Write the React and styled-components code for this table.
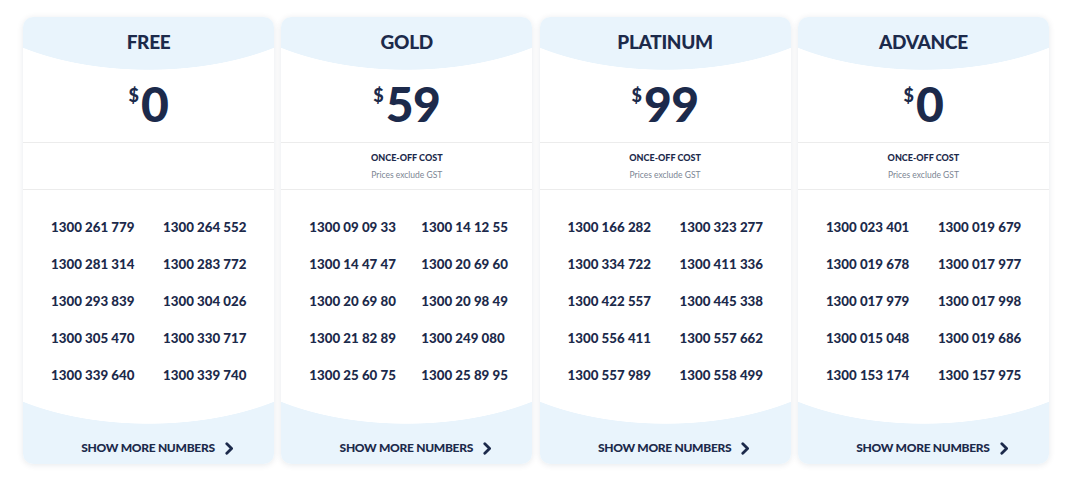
import React from "react";
import styled, { createGlobalStyle } from "styled-components";

const GlobalStyle = createGlobalStyle`
  body {
    margin: 0;
    background: #ffffff;
    font-family: Lato, "Open Sans", sans-serif;
    color: #1c2a4b;
  }
`;

const plans = [
    {
        name: "FREE",
        price: "0",
        cost: false,
        numbers: [
            "1300 261 779", "1300 264 552",
            "1300 281 314", "1300 283 772",
            "1300 293 839", "1300 304 026",
            "1300 305 470", "1300 330 717",
            "1300 339 640", "1300 339 740"
        ]
    },
    {
        name: "GOLD",
        price: "59",
        cost: true,
        numbers: [
            "1300 09 09 33", "1300 14 12 55",
            "1300 14 47 47", "1300 20 69 60",
            "1300 20 69 80", "1300 20 98 49",
            "1300 21 82 89", "1300 249 080",
            "1300 25 60 75", "1300 25 89 95"
        ]
    },
    {
        name: "PLATINUM",
        price: "99",
        cost: true,
        numbers: [
            "1300 166 282", "1300 323 277",
            "1300 334 722", "1300 411 336",
            "1300 422 557", "1300 445 338",
            "1300 556 411", "1300 557 662",
            "1300 557 989", "1300 558 499"
        ]
    },
    {
        name: "ADVANCE",
        price: "0",
        cost: true,
        numbers: [
            "1300 023 401", "1300 019 679",
            "1300 019 678", "1300 017 977",
            "1300 017 979", "1300 017 998",
            "1300 015 048", "1300 019 686",
            "1300 153 174", "1300 157 975"
        ]
    }
];

const Page = styled.div`
  padding: 17px 0 21px 23px;
  display: grid;
  grid-template-columns: repeat(4, 251px);
  column-gap: 7.3px;
`;

const Card = styled.div`
  display: flex;
  flex-direction: column;
  background: #ffffff;
  border-radius: 10px;
  overflow: hidden;
  box-shadow: 0 1px 6px rgba(20, 40, 70, 0.1);
`;

const Top = styled.div`
  display: flex;
  flex-direction: column;
  align-items: center;
  padding: 12.5px 0 14px;
  background: radial-gradient(201px 100px at 50% -47px, #e9f4fc 99.4%, #ffffff 100%);
  border-bottom: 1px solid #ececec;
`;

const Title = styled.div`
  font-size: 19px;
  line-height: 24px;
  font-weight: 900;
  letter-spacing: -0.3px;
`;

const Price = styled.div`
  display: flex;
  align-items: flex-start;
  margin-top: 26px;
`;

const Dollar = styled.span`
  font-size: 18px;
  line-height: 1;
  font-weight: 900;
  margin: 6px 2px 0 0;
`;

const Amount = styled.span`
  font-size: 48px;
  line-height: 1;
  font-weight: 900;
  letter-spacing: -0.5px;
`;

const Cost = styled.div`
  height: 47px;
  box-sizing: border-box;
  padding-top: 9px;
  display: flex;
  flex-direction: column;
  align-items: center;
  border-bottom: 1px solid #ececec;
`;

const CostTitle = styled.div`
  font-size: 9px;
  line-height: 12px;
  font-weight: 900;
`;

const CostNote = styled.div`
  font-size: 8.5px;
  line-height: 12px;
  margin-top: 5px;
  color: #7b8593;
`;

const Numbers = styled.div`
  display: grid;
  grid-template-columns: 112px 112px;
  grid-auto-rows: 37px;
  align-items: center;
  padding: 19px 0 8px 28px;
`;

const Number = styled.div`
  font-size: 13.3px;
  font-weight: 900;
  white-space: nowrap;
`;

const Footer = styled.div`
  height: 62px;
  box-sizing: border-box;
  display: flex;
  align-items: flex-end;
  justify-content: center;
  gap: 10px;
  padding: 0 0 9px 18px;
  background: radial-gradient(201px 100px at 50% -78px, #ffffff 99.4%, #e9f4fc 100%);
`;

const More = styled.span`
  font-size: 12px;
  line-height: 14px;
  font-weight: 900;
  letter-spacing: -0.3px;
`;

const Chevron = () => (
    <svg width="9" height="13" viewBox="0 0 9 13">
        <polyline points="1.8,1.8 6.6,6.5 1.8,11.2" fill="none" stroke="#1c2a4b" strokeWidth="2.8"
                  strokeLinecap="round" strokeLinejoin="round"/>
    </svg>
);

const PlanCard = ({plan}) => (
    <Card>
        <Top>
            <Title>{plan.name}</Title>
            <Price>
                <Dollar>$</Dollar>
                <Amount>{plan.price}</Amount>
            </Price>
        </Top>
        <Cost>
            {plan.cost && (
                <>
                    <CostTitle>ONCE-OFF COST</CostTitle>
                    <CostNote>Prices exclude GST</CostNote>
                </>
            )}
        </Cost>
        <Numbers>
            {plan.numbers.map((n) => <Number key={n}>{n}</Number>)}
        </Numbers>
        <Footer>
            <More>SHOW MORE NUMBERS</More>
            <Chevron/>
        </Footer>
    </Card>
);

const App = () => (
    <>
        <GlobalStyle/>
        <Page>
            {plans.map((p) => <PlanCard key={p.name} plan={p}/>)}
        </Page>
    </>
);

export default App;
